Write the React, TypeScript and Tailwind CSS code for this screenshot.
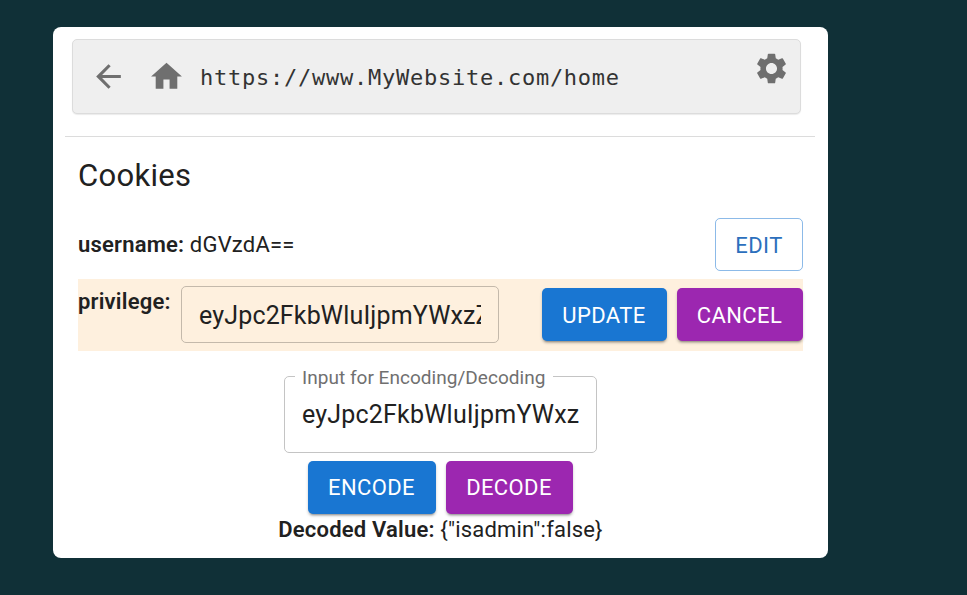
import { MdArrowBack, MdHome, MdSettings } from "react-icons/md";
import type { ReactNode } from "react";

const variants = {
  primary: "bg-[#1976d2] text-white shadow-[0_3px_2px_-2px_rgba(0,0,0,0.25),0_2px_3px_rgba(0,0,0,0.22)]",
  secondary: "bg-[#9c27b0] text-white shadow-[0_3px_2px_-2px_rgba(0,0,0,0.25),0_2px_3px_rgba(0,0,0,0.22)]",
  outlined: "border border-[#1976d2]/50 text-[#2c6fbd]",
};

function Button({
  variant,
  width,
  pad = "pt-px",
  children,
}: {
  variant: keyof typeof variants;
  width: string;
  pad?: string;
  children: ReactNode;
}) {
  return (
    <button
      className={`flex h-[53px] shrink-0 items-center justify-center whitespace-nowrap rounded-[5px] text-[22px] tracking-[0.4px] ${pad} ${variants[variant]} ${width}`}
    >
      {children}
    </button>
  );
}

export default function App() {
  return (
    <div className="h-[595px] w-[967px] overflow-hidden bg-[#103037] pl-[53px] pt-[27px] font-['Roboto',sans-serif] font-[370] text-[#212121]">
      <main className="flex h-[531px] w-[775px] flex-col rounded-lg bg-white pt-3">
        <header className="ml-[19px] flex h-[75px] w-[729px] shrink-0 items-center rounded-[5px] border border-[#dcdcdc] bg-[#efefef] pl-[17px] pr-[10px] shadow-[0_1px_1px_rgba(0,0,0,0.08)]">
          <MdArrowBack className="size-[37px] text-[#6f6f6f]" />
          <MdHome className="ml-[21px] size-[37px] text-[#6f6f6f]" />
          <span className="ml-[15px] whitespace-nowrap pt-px font-['DejaVu_Sans_Mono',monospace] text-[22px] tracking-[0.75px] text-[#333]">
            https://www.MyWebsite.com/home
          </span>
          <MdSettings className="mb-4 ml-auto size-[37px] text-[#6f6f6f]" />
        </header>
        <hr className="ml-3 mt-[22px] w-[750px] shrink-0 border-t border-[#dcdcdc]" />

        <section className="ml-[25px] w-[725px]">
          <h1 className="mt-[19px] h-[40px] text-[31px] leading-[40px] tracking-[0.3px]">Cookies</h1>
          <div className="mt-[22px] flex h-[53px] items-center justify-between">
            <p className="whitespace-nowrap text-[22px] tracking-[0.2px]">
              <b className="font-semibold">username:</b> dGVzdA==
            </p>
            <Button variant="outlined" width="w-[88px]">EDIT</Button>
          </div>
          <div className="mt-2 flex h-[72px] bg-[#fef0de]">
            <b className="w-[103px] shrink-0 pt-[6px] text-[22px] font-semibold leading-[33px] tracking-[0.2px]">privilege:</b>
            <div className="mt-[7px] flex h-[57px] w-[318px] items-center rounded-[5px] border border-[#c4b9ab] px-[17px]">
              <span className="w-[284px] overflow-hidden whitespace-nowrap pt-[3px] text-[25px] tracking-[0.16px]">
                eyJpc2FkbWluIjpmYWxzZX0=
              </span>
            </div>
            <div className="ml-auto mt-[9px] flex gap-[10px]">
              <Button variant="primary" width="w-[125px]" pad="pt-px pr-px">UPDATE</Button>
              <Button variant="secondary" width="w-[126px]" pad="pt-px pr-px">CANCEL</Button>
            </div>
          </div>
        </section>

        <section className="flex w-[775px] flex-col items-center">
          <fieldset className="mt-[14px] h-[88px] w-[313px] rounded-[5px] border border-[#c4c4c4] px-[10px]">
            <legend className="h-[22px] w-[258px] whitespace-nowrap px-[7px] pt-[2px] text-[19px] leading-[22px] tracking-[0.03px] text-[#707070]">
              Input for Encoding/Decoding
            </legend>
            <div className="ml-[7px] mt-[11px] w-[280px] whitespace-nowrap text-[25px] leading-[34px] tracking-[0.2px]">
              eyJpc2FkbWluIjpmYWxz
            </div>
          </fieldset>
          <div className="mt-2 flex gap-[10px]">
            <Button variant="primary" width="w-[128px]" pad="pb-px pr-px">ENCODE</Button>
            <Button variant="secondary" width="w-[127px]" pad="pb-px pr-px">DECODE</Button>
          </div>
          <p className="whitespace-nowrap text-[22px] leading-[31px] tracking-[0.2px]">
            <b className="font-semibold">Decoded Value:</b> {'{"isadmin":false}'}
          </p>
        </section>
      </main>
    </div>
  );
}
